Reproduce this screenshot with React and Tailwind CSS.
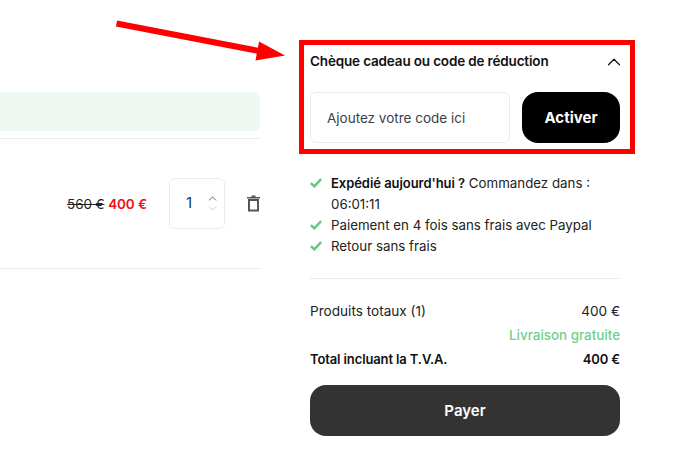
import { ChevronUp, ChevronDown } from 'lucide-react';

function CheckMark() {
  return (
    <svg className="mt-[5px] shrink-0 text-[#62c982]" width="12" height="10" viewBox="0 0 12 10" fill="none">
      <path d="M0.9 5.2 L4.3 8.4 L11.1 1.2" stroke="currentColor" strokeWidth="2.5" />
    </svg>
  );
}

function TrashIcon() {
  return (
    <svg className="shrink-0 text-[#555]" width="13" height="17" viewBox="0 0 13 17" fill="none">
      <path d="M4.5 0.5h4v1.5h4.5v1.5h-13v-1.5h4.5z" fill="currentColor" />
      <path d="M2 5h9v10.5h-9z" stroke="currentColor" strokeWidth="2" />
    </svg>
  );
}

function Perk({ children }) {
  return (
    <li className="flex gap-[9px]">
      <CheckMark />
      <span>{children}</span>
    </li>
  );
}

function CartRow() {
  return (
    <div className="flex h-[130px] items-center justify-end border-b border-[#ebebeb]">
      <p className="mr-[22px] text-[13.5px] leading-5 tracking-[-0.1px]">
        <s className="text-[#222]">560 €</s> <span className="font-semibold text-[#f01010]">400 €</span>
      </p>
      <div className="mr-[22px] flex h-[51px] w-[56px] items-center justify-between rounded-md border border-[#ececec] pl-[16px] pr-[5px]">
        <span className="text-[15px] text-[#0f3d66]">1</span>
        <span className="flex flex-col">
          <ChevronUp size={13} strokeWidth={1.8} className="text-[#4f6a82]" />
          <ChevronDown size={13} strokeWidth={1.3} className="-mt-[3px] text-[#bcbcbc]" />
        </span>
      </div>
      <TrashIcon />
    </div>
  );
}

export default function App() {
  return (
    <div className="relative flex h-[455px] w-[678px] gap-[50px] overflow-hidden bg-white font-['Inter',sans-serif] text-[#111]">
      <svg className="pointer-events-none absolute left-0 top-0" width="300" height="80" viewBox="0 0 300 80">
        <path d="M116.5 23.5 L259 51" stroke="#ff0000" strokeWidth="6" fill="none" />
        <path d="M259 41.5 L285 55.5 L255.5 60.5 Z" fill="#ff0000" />
      </svg>

      <main className="w-[260px] pt-[92px]">
        <div className="h-[39px] rounded-r-md bg-[#eef7f1]" />
        <div className="mt-[7px] border-b border-[#ebebeb]" />
        <CartRow />
      </main>

      <aside className="w-[310px] pt-[51px]">
        <section className="relative">
          <div className="pointer-events-none absolute -left-[11px] -right-[15px] -top-[11px] h-[114px] border-[5px] border-[#ff0000]" />
          <div className="flex h-5 items-center justify-between">
            <h3 className="text-[13.5px] font-semibold tracking-[-0.16px]">Chèque cadeau ou code de réduction</h3>
            <ChevronUp size={22} strokeWidth={1.3} className="-mr-[5px] mt-px shrink-0" />
          </div>
          <div className="mt-[21px] flex gap-3">
            <div className="flex h-[51px] w-[200px] items-center rounded-md border border-[#ececec] pl-4 pt-px text-[13.5px] text-[#3a3f45]">
              Ajoutez votre code ici
            </div>
            <button type="button" className="h-[51px] w-[98px] rounded-2xl bg-black pt-[2px] text-[15px] font-bold text-white">
              Activer
            </button>
          </div>
        </section>

        <ul className="mt-[30px] border-b border-[#ebebeb] pb-[21px] text-[13.3px] leading-[21px] text-[#222]">
          <Perk>
            <b className="text-[13px] font-semibold tracking-[-0.05px] text-[#111]">Expédié aujourd'hui ?</b> Commandez dans : 06:01:11
          </Perk>
          <Perk>Paiement en 4 fois sans frais avec Paypal</Perk>
          <Perk>Retour sans frais</Perk>
        </ul>

        <dl className="mt-[20px] text-[13.6px] leading-6 text-[#222]">
          <div className="flex justify-between">
            <dt>Produits totaux (1)</dt>
            <dd>400 €</dd>
          </div>
          <div className="flex justify-end text-[13.4px] font-medium text-[#6fcf8c]">Livraison gratuite</div>
          <div className="flex justify-between text-[13px] font-semibold tracking-[-0.12px] text-[#111]">
            <dt>Total incluant la T.V.A.</dt>
            <dd>400 €</dd>
          </div>
        </dl>

        <button type="button" className="mt-[14px] h-[51px] w-full rounded-2xl bg-[#333] pt-[2px] text-[15px] font-semibold text-white">
          Payer
        </button>
      </aside>
    </div>
  );
}
